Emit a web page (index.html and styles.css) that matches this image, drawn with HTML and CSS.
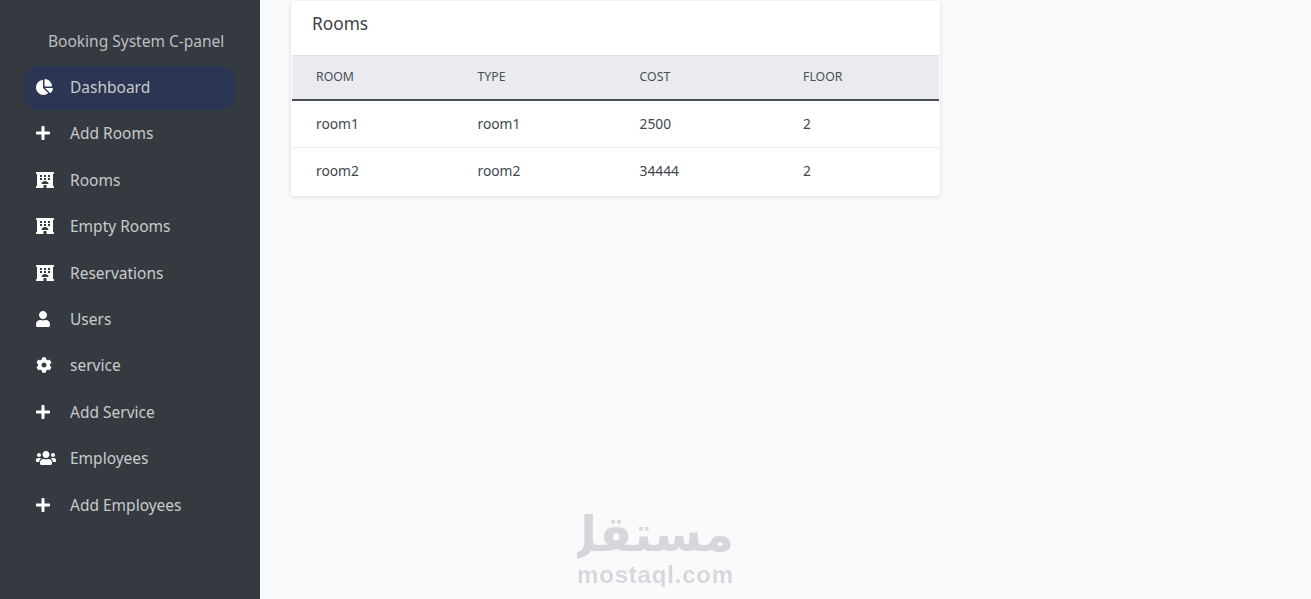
FILE: index.html
```html
<!DOCTYPE html>
<html lang="en">
<head>
    <meta charset="UTF-8">
    <meta name="viewport" content="width=device-width, initial-scale=1.0">
    <title>Booking System C-panel</title>
    <link rel="stylesheet" href="styles.css">
</head>
<body>
    <svg class="icon-defs" aria-hidden="true">
        <symbol id="i-pie" viewBox="0 0 544 512" preserveAspectRatio="xMinYMid"><path d="M527.79 288H290.5l158.03 158.03c6.04 6.04 15.98 6.53 22.19.68 38.7-36.46 65.32-85.61 73.13-140.86 1.34-9.46-6.51-17.85-16.06-17.85zm-15.83-64.8C503.72 103.74 408.26 8.28 288.8.04 279.68-.59 272 7.1 272 16.24V240h223.77c9.14 0 16.82-7.68 16.19-16.8zM224 288V50.71c0-9.55-8.39-17.4-17.84-16.06C86.99 51.49-4.1 155.6.14 280.37 4.5 408.51 114.83 513.59 243.03 511.98c50.4-.63 96.97-16.87 135.26-44.03 7.9-5.6 8.42-17.23 1.57-24.08L224 288z"/></symbol>
        <symbol id="i-plus" viewBox="0 0 448 512" preserveAspectRatio="xMinYMid"><path d="M416 208H272V64c0-17.67-14.33-32-32-32h-32c-17.67 0-32 14.33-32 32v144H32c-17.67 0-32 14.33-32 32v32c0 17.67 14.33 32 32 32h144v144c0 17.67 14.33 32 32 32h32c17.67 0 32-14.33 32-32V304h144c17.67 0 32-14.33 32-32v-32c0-17.67-14.33-32-32-32z"/></symbol>
        <symbol id="i-hotel" viewBox="0 0 576 512" preserveAspectRatio="xMinYMid"><path fill-rule="evenodd" d="M16 0h544c9 0 16 7 16 16v32c0 9-7 16-16 16h-16v384h16c9 0 16 7 16 16v32c0 9-7 16-16 16H336v-80c0-9-7-16-16-16h-64c-9 0-16 7-16 16v80H16c-9 0-16-7-16-16v-32c0-9 7-16 16-16h16V64H16C7 64 0 57 0 48V16C0 7 7 0 16 0zm112 96v64h64V96h-64zm128 0v64h64V96h-64zm128 0v64h64V96h-64zM128 192v64h64v-64h-64zm128 0v64h64v-64h-64zm128 0v64h64v-64h-64zM176 384h224c0-53-50-96-112-96s-112 43-112 96z"/></symbol>
        <symbol id="i-user" viewBox="0 0 448 512" preserveAspectRatio="xMinYMid"><path d="M224 256c70.7 0 128-57.3 128-128S294.7 0 224 0 96 57.3 96 128s57.3 128 128 128zm89.6 32h-16.7c-22.2 10.2-46.9 16-72.9 16s-50.6-5.8-72.9-16h-16.7C60.2 288 0 348.2 0 422.4V464c0 26.5 21.5 48 48 48h352c26.5 0 48-21.5 48-48v-41.6c0-74.2-60.2-134.4-134.4-134.4z"/></symbol>
        <symbol id="i-cog" viewBox="0 0 512 512" preserveAspectRatio="xMinYMid"><path d="M487.4 315.7l-42.6-24.6c4.3-23.2 4.3-47 0-70.2l42.6-24.6c4.9-2.8 7.1-8.6 5.5-14-11.1-35.6-30-67.8-54.7-94.6-3.8-4.1-10-5.1-14.8-2.3L380.8 110c-17.9-15.4-38.5-27.3-60.8-35.1V25.8c0-5.6-3.9-10.5-9.4-11.7-36.7-8.2-74.3-7.8-109.2 0-5.5 1.2-9.4 6.1-9.4 11.7V75c-22.2 7.9-42.8 19.8-60.8 35.1L88.7 85.5c-4.9-2.8-11-1.9-14.8 2.3-24.7 26.7-43.6 58.9-54.7 94.6-1.7 5.4.6 11.2 5.5 14L67.3 221c-4.3 23.2-4.3 47 0 70.2l-42.6 24.6c-4.9 2.8-7.1 8.6-5.5 14 11.1 35.6 30 67.8 54.7 94.6 3.8 4.1 10 5.1 14.8 2.3l42.6-24.6c17.9 15.4 38.5 27.3 60.8 35.1v49.2c0 5.6 3.9 10.5 9.4 11.7 36.7 8.2 74.3 7.8 109.2 0 5.5-1.2 9.4-6.1 9.4-11.7v-49.2c22.2-7.9 42.8-19.8 60.8-35.1l42.6 24.6c4.9 2.8 11 1.9 14.8-2.3 24.7-26.7 43.6-58.9 54.7-94.6 1.5-5.5-.7-11.3-5.6-14.1zM256 336c-44.1 0-80-35.9-80-80s35.9-80 80-80 80 35.9 80 80-35.9 80-80 80z"/></symbol>
        <symbol id="i-users" viewBox="0 0 640 512" preserveAspectRatio="xMinYMid"><path d="M96 224c35.3 0 64-28.7 64-64s-28.7-64-64-64-64 28.7-64 64 28.7 64 64 64zm448 0c35.3 0 64-28.7 64-64s-28.7-64-64-64-64 28.7-64 64 28.7 64 64 64zm32 32h-64c-17.6 0-33.5 7.1-45.1 18.6 40.3 22.1 68.9 62 75.1 109.4h66c17.7 0 32-14.3 32-32v-32c0-35.3-28.7-64-64-64zm-256 0c61.9 0 112-50.1 112-112S381.9 32 320 32 208 82.1 208 144s50.1 112 112 112zm76.8 32h-8.3c-20.8 10-43.9 16-68.5 16s-47.6-6-68.5-16h-8.3C179.6 288 128 339.6 128 403.2V432c0 26.5 21.5 48 48 48h288c26.5 0 48-21.5 48-48v-28.8c0-63.6-51.6-115.2-115.2-115.2zm-223.7-13.4C161.5 263.1 145.6 256 128 256H64c-35.3 0-64 28.7-64 64v32c0 17.7 14.3 32 32 32h65.9c6.3-47.4 34.9-87.3 75.2-109.4z"/></symbol>
    </svg>

    <div class="wrapper">
        <nav class="sidebar">
            <div class="brand">Booking System C-panel</div>
            <ul class="nav-list">
                <li class="nav-item active"><svg class="icon"><use href="#i-pie"/></svg><span>Dashboard</span></li>
                <li class="nav-item"><svg class="icon"><use href="#i-plus"/></svg><span>Add Rooms</span></li>
                <li class="nav-item"><svg class="icon"><use href="#i-hotel"/></svg><span>Rooms</span></li>
                <li class="nav-item"><svg class="icon"><use href="#i-hotel"/></svg><span>Empty Rooms</span></li>
                <li class="nav-item"><svg class="icon"><use href="#i-hotel"/></svg><span>Reservations</span></li>
                <li class="nav-item"><svg class="icon"><use href="#i-user"/></svg><span>Users</span></li>
                <li class="nav-item"><svg class="icon"><use href="#i-cog"/></svg><span>service</span></li>
                <li class="nav-item"><svg class="icon"><use href="#i-plus"/></svg><span>Add Service</span></li>
                <li class="nav-item"><svg class="icon"><use href="#i-users"/></svg><span>Employees</span></li>
                <li class="nav-item"><svg class="icon"><use href="#i-plus"/></svg><span>Add Employees</span></li>
            </ul>
            <hr class="divider">
        </nav>

        <main class="content">
            <section class="card">
                <h3 class="card-title">Rooms</h3>
                <table class="rooms-table">
                    <thead>
                        <tr><th>Room</th><th>Type</th><th>Cost</th><th>Floor</th></tr>
                    </thead>
                    <tbody>
                        <tr><td>room1</td><td>room1</td><td>2500</td><td>2</td></tr>
                        <tr><td>room2</td><td>room2</td><td>34444</td><td>2</td></tr>
                    </tbody>
                </table>
            </section>
        </main>
    </div>

    <div class="watermark">
        <div class="wm-ar" lang="ar" dir="rtl">مستقل</div>
        <div class="wm-en">mostaql.com</div>
    </div>
</body>
</html>
```

FILE: styles.css
```css
* {
    box-sizing: border-box;
}
html, body {
    height: 100%;
}
body {
    margin: 0;
    overflow: hidden;
    font-family: "Noto Sans", "Open Sans", sans-serif;
    font-size: 15px;
    color: #3c4248;
    background-color: #f9fafc;
}
.icon-defs {
    display: none;
}
.wrapper {
    display: flex;
    height: 100%;
}

/* sidebar */
.sidebar {
    flex: 0 0 260px;
    padding: 30px 24px 0;
    background-color: #343a40;
}
.brand {
    padding-left: 24px;
    height: 24px;
    margin-bottom: 12px;
    font-size: 15.5px;
    line-height: 22px;
    color: #bcbec0;
    white-space: nowrap;
}
.nav-list {
    list-style: none;
    margin: 0;
    padding: 0;
}
.nav-item {
    display: flex;
    align-items: center;
    height: 44px;
    margin-bottom: 2.4px;
    padding-left: 12px;
    border-radius: 14px;
    font-size: 15.5px;
    color: #c8cacc;
}
.nav-item span {
    padding-bottom: 2px;
}
.nav-item.active {
    background-color: #2c3552;
}
.icon {
    flex: 0 0 34px;
    width: 34px;
    height: 16px;
    margin-bottom: 2px;
    fill: #fff;
    overflow: visible;
}
.divider {
    height: 1px;
    margin: 25px 0 0;
    border: 0;
    background-color: #2f3547;
}

/* main area */
.content {
    flex: 1;
    padding: 1px 31px;
}
.card {
    width: 649px;
    padding: 0 1px 1px;
    background-color: #fff;
    border-radius: 4px;
    box-shadow: 0 1px 5px rgba(60, 70, 90, 0.16);
}
.card-title {
    height: 54px;
    margin: 0;
    padding: 11px 20px 0;
    font-size: 17.3px;
    font-weight: 400;
    line-height: 24px;
    color: #3c4248;
}
.rooms-table {
    width: 100%;
    border-collapse: collapse;
    table-layout: fixed;
}
.rooms-table th:nth-child(1) { width: 161.5px; }
.rooms-table th:nth-child(2) { width: 162px; }
.rooms-table th:nth-child(3) { width: 163.5px; }
.rooms-table th {
    height: 44px;
    padding: 0 24px 1px;
    border-top: 1px solid #dee0e3;
    border-bottom: 2px solid #495057;
    background-color: #e9ebef;
    font-size: 12.3px;
    font-weight: 400;
    text-align: left;
    text-transform: uppercase;
    color: #495057;
}
.rooms-table td {
    height: 47px;
    padding: 0 24px 1px;
    font-size: 13.8px;
    color: #40464c;
}
.rooms-table tbody tr:first-child td {
    height: 48px;
}
.rooms-table tbody tr + tr td {
    border-top: 1px solid #e9ecef;
}

/* watermark lies over the page */
.watermark {
    position: absolute;
    left: 577px;
    top: 507px;
    width: 157px;
    text-align: center;
    color: transparent;
    background-image: radial-gradient(circle, #d6d7da 0.8px, #eaebee 1px);
    background-size: 2px 2px;
    -webkit-background-clip: text;
    background-clip: text;
}
.wm-ar {
    height: 56px;
    font-family: "DejaVu Sans", sans-serif;
    font-size: 49px;
    font-weight: 700;
    line-height: 56px;
}
.wm-en {
    height: 24px;
    font-family: "Liberation Sans", sans-serif;
    font-size: 24px;
    font-weight: 700;
    line-height: 24px;
    letter-spacing: 0.8px;
    white-space: nowrap;
}
```
